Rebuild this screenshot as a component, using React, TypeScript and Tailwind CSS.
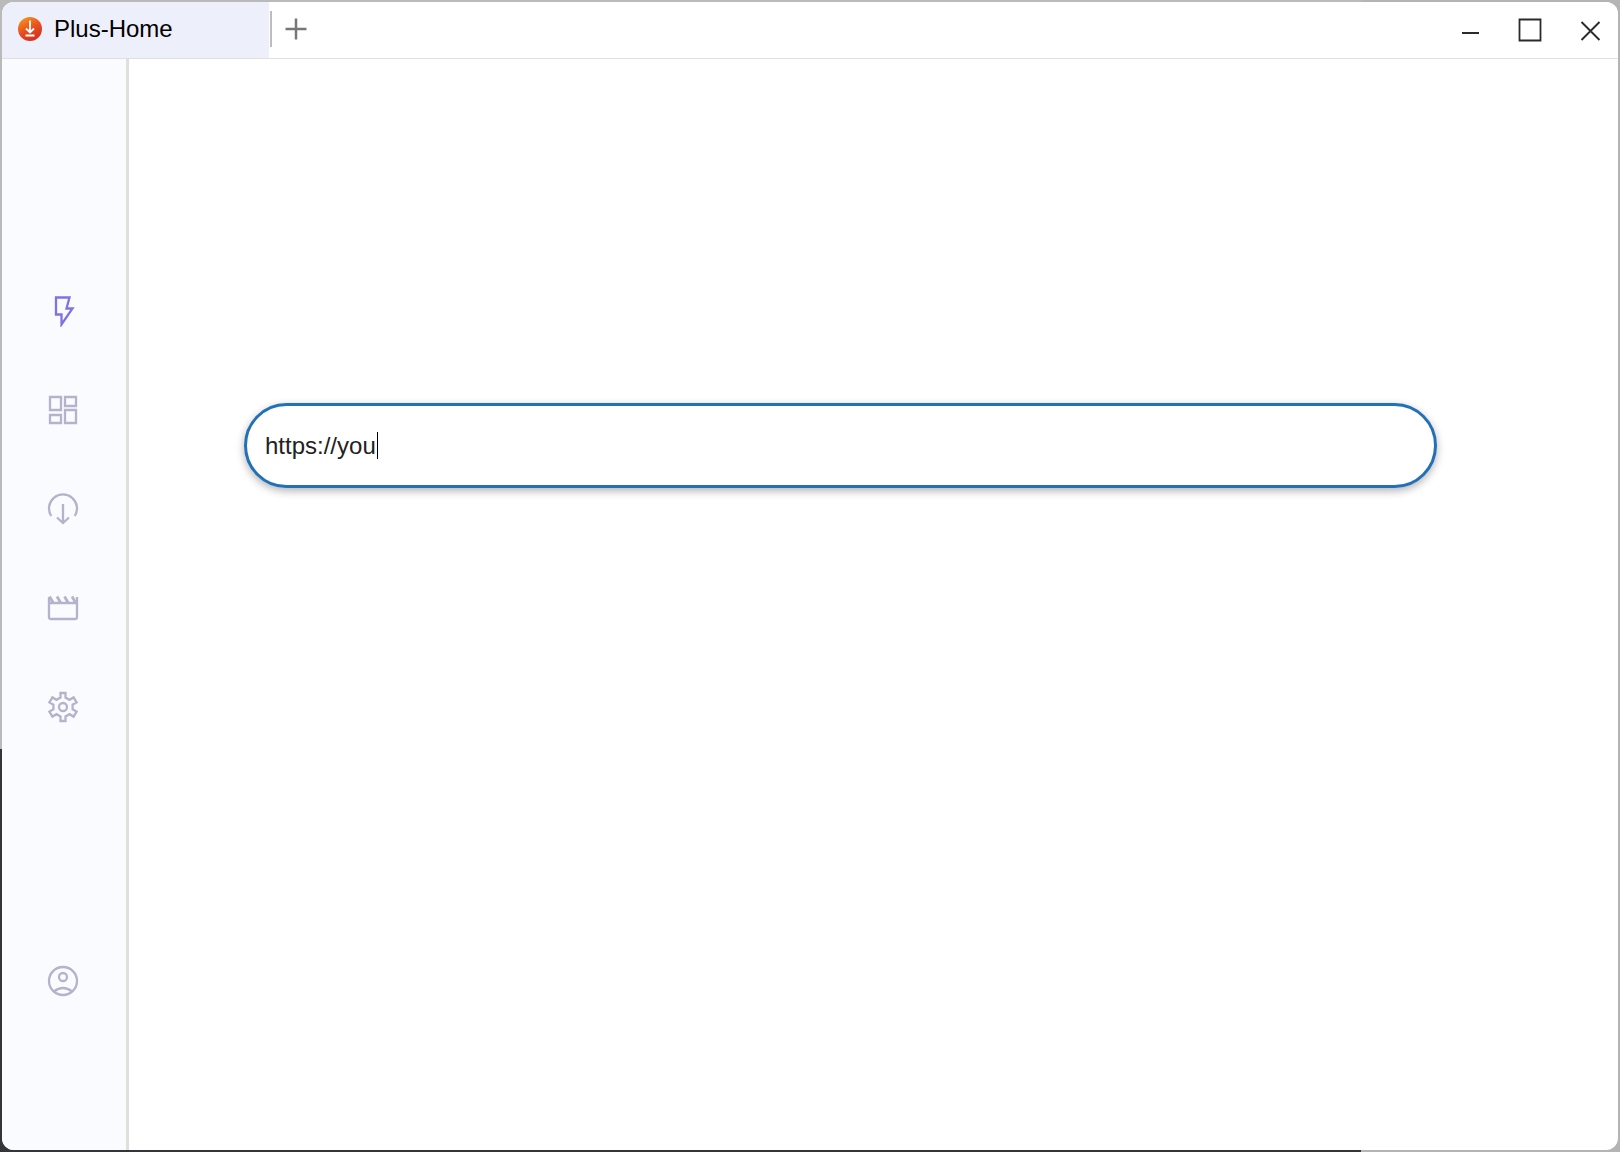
import type { ReactNode } from 'react';
import { useState } from 'react';

const icons: { label: string; art: ReactNode }[] = [
  {
    label: 'Quick start',
    art: <path d="M9 2.500h13.500L19.500 13.500h6L14.500 29.500V19.500H9z" />,
  },
  {
    label: 'Dashboard',
    art: <path d="M3 3h11v13H3zM18 3h11v9H18zM3 21h11v8H3zM18 16h11v13H18z" />,
  },
  {
    label: 'Downloads',
    art: (
      <>
        <path d="M4.200 23A14 14 0 1 1 27.800 23" />
        <path d="M16 11v19M10 24.500l6 5.500 6-5.500" />
      </>
    ),
  },
  {
    label: 'Videos',
    art: (
      <>
        <path d="M2 5v20a2 2 0 0 0 2 2h24a2 2 0 0 0 2-2V5M2 11h28" />
        <path d="M2.500 4.500l3.500 6M10 4.500l3.500 6M17.500 4.500l3.500 6M25 4.500l3.500 6" strokeWidth="2.800" />
      </>
    ),
  },
  {
    label: 'Settings',
    art: (
      <>
        <path d="M13.500 2h5v4.500l4 2.300 4.100-2.400 3 5-4 2.300v4.600l4 2.300-3 5-4.100-2.400-4 2.300V30h-5v-4.500l-4-2.300-4.100 2.400-3-5 4-2.300v-4.600l-4-2.300 3-5 4.100 2.400 4-2.300z" />
        <circle cx="16" cy="16" r="4" />
      </>
    ),
  },
];

const NavIcon = ({ children }: { children: ReactNode }) => (
  <svg viewBox="0 0 32 32" className="h-8 w-8" fill="none" stroke="currentColor" strokeWidth="2.300">
    {children}
  </svg>
);

const Logo = () => (
  <svg viewBox="0 0 24 24" className="h-6 w-6">
    <defs>
      <linearGradient id="logo" x1="0.2" y1="0" x2="0.7" y2="1">
        <stop offset="0" stopColor="#f7941d" />
        <stop offset="0.5" stopColor="#e8501f" />
        <stop offset="1" stopColor="#cc3020" />
      </linearGradient>
    </defs>
    <circle cx="12" cy="12" r="12" fill="url(#logo)" />
    <path d="M12 3.500v12M8 11.500l4 4 4-4M7.500 18.500h9" fill="none" stroke="#fff" strokeWidth="1.800" />
  </svg>
);

const TitleBar = () => (
  <header className="flex h-[57px] items-center border-b border-[#dfdfdf] bg-white">
    <div className="flex h-full w-[267px] items-center gap-3 bg-[#edeffa] pb-0.5 pl-4">
      <Logo />
      <span className="text-2xl text-black">Plus-Home</span>
    </div>
    <div className="mb-0.5 h-9 w-[3px] border-r-2 border-[#bdbdbd]" />
    <button type="button" aria-label="New tab" className="mb-0.5 ml-3 text-[#777777]">
      <svg viewBox="0 0 24 24" className="h-6 w-6" fill="none" stroke="currentColor" strokeWidth="2.500">
        <path d="M12 1.500v21M1.500 12h21" />
      </svg>
    </button>
    <div className="ml-auto flex items-center gap-9 pr-4 text-[#2b2b2b]">
      <button type="button" aria-label="Minimize">
        <svg viewBox="0 0 24 24" className="h-6 w-6" fill="none" stroke="currentColor" strokeWidth="2">
          <path d="M4 15h17" />
        </svg>
      </button>
      <button type="button" aria-label="Maximize">
        <svg viewBox="0 0 24 24" className="h-6 w-6" fill="none" stroke="currentColor" strokeWidth="1.800">
          <path d="M1.500 1.500h21v21h-21z" />
        </svg>
      </button>
      <button type="button" aria-label="Close">
        <svg viewBox="0 0 24 24" className="h-6 w-6" fill="none" stroke="currentColor" strokeWidth="1.900">
          <path d="M3.500 4l18 18M21.500 4l-18 18" />
        </svg>
      </button>
    </div>
  </header>
);

const Sidebar = () => (
  <nav className="flex w-[127px] shrink-0 flex-col items-center border-r-3 border-[#dfe0d9] bg-[#fafbfe] pt-[236px] pr-0.5 text-[#b3b3cb]">
    <div className="flex flex-col gap-[67px]">
      {icons.map((icon, index) => (
        <button key={icon.label} type="button" aria-label={icon.label} className={index === 0 ? 'text-[#7e72e4]' : ''}>
          <NavIcon>{icon.art}</NavIcon>
        </button>
      ))}
    </div>
    <button type="button" aria-label="Account" className="mt-[242px]">
      <NavIcon>
        <circle cx="16" cy="16" r="14" />
        <circle cx="16" cy="12" r="4" />
        <path d="M7 26.500q9-7 18 0" />
      </NavIcon>
    </button>
  </nav>
);

const App = () => {
  const [url, setUrl] = useState('https://you');

  return (
    <div className="flex min-h-screen flex-col bg-[linear-gradient(90deg,transparent_84%,#b4b4b4_84%),linear-gradient(#bababa_65%,#353539_65%)] p-[2px] font-['Liberation_Sans',Arial,sans-serif]">
      <div className="flex grow flex-col overflow-hidden rounded-xl bg-white">
        <TitleBar />
        <div className="flex grow">
          <Sidebar />
          <main className="grow pt-[344px] pr-[181px] pl-[115px]">
            <div className="relative">
              <input
                type="text"
                aria-label="Address"
                value={url}
                onChange={(e) => setUrl(e.target.value)}
                className="h-[85px] w-full rounded-full border-3 border-[#2170b8] bg-white px-[18px] text-2xl text-[#222222] caret-transparent shadow-[0_3px_8px_rgba(0,0,0,0.3)] outline-none"
              />
              {/* text cursor */}
              <span className="absolute top-[29px] left-[133px] h-[27px] w-px bg-black" />
            </div>
          </main>
        </div>
      </div>
    </div>
  );
};

export default App;
